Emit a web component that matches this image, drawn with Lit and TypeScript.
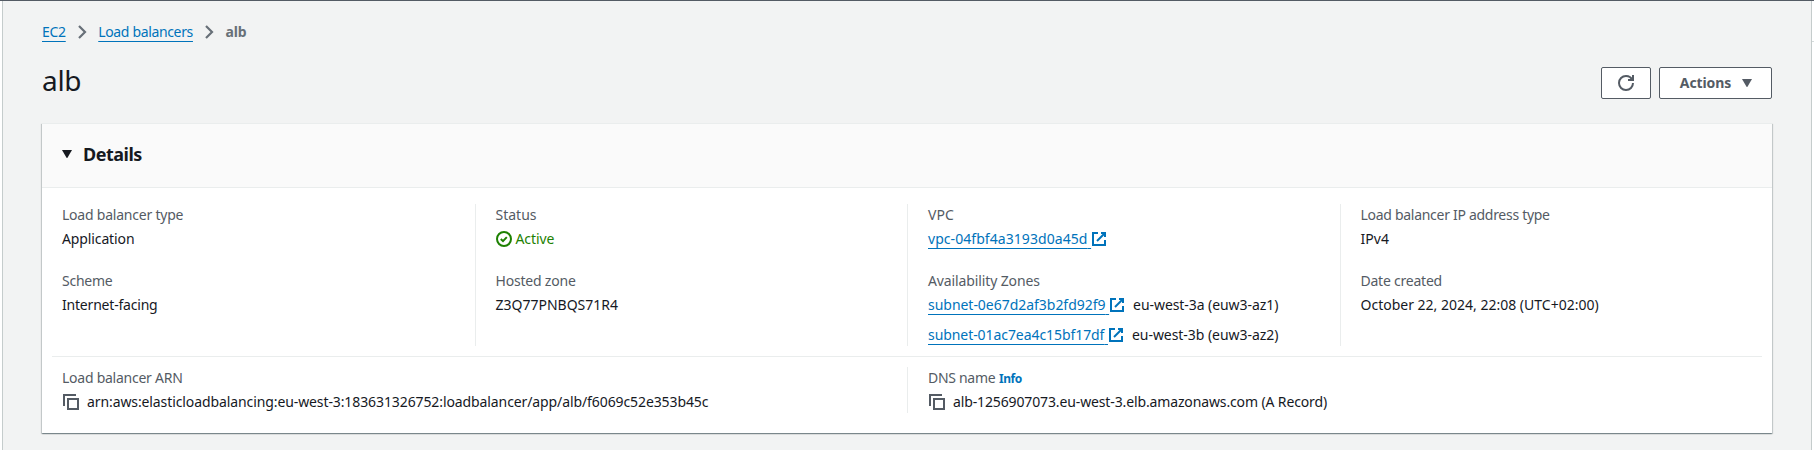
import { LitElement, html, css, svg, TemplateResult } from "lit";
import { customElement } from "lit/decorators.js";

/** Text run with its own tracking in px. */
const t = (text: string, tracking = 0) =>
  html`<span style="letter-spacing:${tracking}px">${text}</span>`;

const icon = (body: TemplateResult<2>, cls = "") =>
  html`<svg class="icon ${cls}" viewBox="0 0 16 16" fill="none" stroke="currentColor" stroke-width="2" aria-hidden="true">${body}</svg>`;

const refreshIcon = icon(svg`<path d="M10 5h5V0"/><path d="M15 8a6.957 6.957 0 0 1-7 7 6.957 6.957 0 0 1-7-7 6.957 6.957 0 0 1 7-7 6.87 6.87 0 0 1 6.3 4"/>`);
const activeIcon = icon(svg`<circle cx="8" cy="8" r="7"/><path d="m4.8 8 2.2 2.1 3.8-4"/>`);
const externalIcon = icon(svg`<path d="M10 2h4v4"/><path d="m6 10 8-8"/><path d="M14 9.048V14H2V2h5"/>`);
const copyIcon = icon(svg`<path d="M1 12V1h12"/><path d="M5 5h10v10H5z"/>`, "copy");
const chevron = html`<svg class="chevron" viewBox="0 0 9 14" fill="none" stroke="currentColor" stroke-width="2.2" aria-hidden="true"><path d="M1 1l6 6-6 6"/></svg>`;
const caret = html`<svg class="caret" viewBox="0 0 10 8" fill="currentColor" aria-hidden="true"><path d="M0 0h10L5.6 7.6a.7.7 0 0 1-1.2 0z"/></svg>`;

const link = (text: string, tracking: number) =>
  html`<a class="link">${t(text, tracking)}&nbsp;</a>${externalIcon}`;

const field = (label: unknown, ...lines: unknown[]) => html`
  <div class="field">
    <div class="label">${label}</div>
    <div class="values">${lines.map((l) => html`<div class="value">${l}</div>`)}</div>
  </div>`;

@customElement("app-root")
export class AppRoot extends LitElement {
  static styles = css`
    :host {
      display: block;
      box-sizing: border-box;
      height: 450px;
      overflow: hidden;
      border-top: 1px solid #545b64;
      background: #fff;
      font: 14px/22px "Noto Sans", sans-serif;
      color: #16191f;
    }
    .shell { display: flex; height: 449px; box-sizing: border-box; padding-left: 2px; }
    main {
      flex: 1;
      min-width: 0;
      box-sizing: border-box;
      padding: 20px 39px 0;
      border-left: 1px solid #c5cccc;
      border-right: 1px solid #c5cccc;
      background: #f2f3f3;
    }
    .rail { width: 2px; height: 40px; border-bottom: 1px solid #d5dbdb; }
    .crumbs { display: flex; align-items: center; height: 22px; color: #687078; }
    .crumbs b { font-weight: 700; }
    .chevron { width: 9px; height: 14px; margin: 0 11.5px 0 12px; }
    .link {
      color: #0073bb;
      text-decoration: underline 1px;
      text-underline-offset: 4px;
      text-decoration-skip-ink: none;
    }
    .heading { display: flex; justify-content: space-between; height: 80px; }
    h1 { margin: 17px 0 0; font-size: 28px; line-height: 40px; font-weight: 400; }
    .buttons { display: flex; gap: 8px; padding-top: 24px; }
    .button {
      display: flex;
      align-items: center;
      justify-content: center;
      box-sizing: border-box;
      height: 32px;
      border: 1px solid #545b64;
      border-radius: 2px;
      background: #fff;
      color: #545b64;
      font-weight: 700;
    }
    .square { width: 50px; }
    .menu { width: 113px; gap: 11px; padding-left: 1px; }
    .caret { width: 10px; height: 8px; }
    .icon { width: 16px; height: 16px; flex: none; }
    .card {
      box-sizing: border-box;
      height: 310px;
      border-top: 1px solid #eaeded;
      background: #fff;
      box-shadow: 0 1px 1px 0 rgba(0, 28, 36, 0.3), 1px 1px 1px 0 rgba(0, 28, 36, 0.15), -1px 1px 1px 0 rgba(0, 28, 36, 0.15);
    }
    .card-head {
      display: flex;
      align-items: center;
      gap: 11px;
      box-sizing: border-box;
      height: 64px;
      padding: 0 20px 3px;
      border-bottom: 1px solid #eaeded;
      background: #fafafa;
    }
    h2 { margin: 0; font-size: 18px; line-height: 22px; font-weight: 700; }
    .row { display: grid; margin: 0 10px; padding: 10px 0; }
    .four { grid-template-columns: 422.5px 432.5px 432.5px 1fr; padding-top: 16px; border-bottom: 1px solid #eaeded; }
    .two { grid-template-columns: 855px 1fr; }
    .col { display: flex; flex-direction: column; gap: 20px; padding-left: 20px; border-left: 1px solid #eaeded; }
    .col:first-child { padding-left: 10px; border-left: 0; }
    .label { height: 22px; color: #545b64; }
    .values { display: grid; gap: 8px; margin-top: 2px; }
    .value { display: flex; align-items: center; height: 22px; }
    .ok { display: flex; align-items: center; gap: 4px; color: #1d8102; }
    .value > .icon { color: #0073bb; }
    .value > .copy { margin: 0 8px 0 1px; color: #545b64; }
    .zone { margin-left: 8px; }
    .info { color: #0073bb; font-size: 12px; line-height: 16px; font-weight: 700; }
  `;

  render() {
    return html`
      <div class="shell">
        <main>
          <nav class="crumbs">
            <a class="link">${t("EC2", -0.3)}</a>${chevron}
            <a class="link">${t("Load balancers", -0.35)}</a>${chevron}
            <b>${t("alb", -0.1)}</b>
          </nav>
          <div class="heading">
            <h1>${t("alb", -0.3)}</h1>
            <div class="buttons">
              <div class="button square">${refreshIcon}</div>
              <div class="button menu">${t("Actions", -0.1)}${caret}</div>
            </div>
          </div>
          <section class="card">
            <div class="card-head">${caret}<h2>${t("Details", -0.5)}</h2></div>
            <div class="row four">
              <div class="col">
                ${field(t("Load balancer type", -0.22), t("Application", -0.12))}
                ${field(t("Scheme", -0.25), t("Internet-facing", -0.2))}
              </div>
              <div class="col">
                ${field(t("Status", 0), html`<span class="ok">${activeIcon}${t("Active", -0.1)}</span>`)}
                ${field(t("Hosted zone", -0.2), t("Z3Q77PNBQS71R4", 0))}
              </div>
              <div class="col">
                ${field(t("VPC", 0.05), link("vpc-04fbf4a3193d0a45d", 0.06))}
                ${field(
                  t("Availability Zones", -0.12),
                  html`${link("subnet-0e67d2af3b2fd92f9", -0.03)}<span class="zone">${t("eu-west-3a (euw3-az1)", -0.07)}</span>`,
                  html`${link("subnet-01ac7ea4c15bf17df", -0.07)}<span class="zone">${t("eu-west-3b (euw3-az2)", -0.05)}</span>`,
                )}
              </div>
              <div class="col">
                ${field(t("Load balancer IP address type", -0.29), t("IPv4", 0.05))}
                ${field(t("Date created", -0.23), t("October 22, 2024, 22:08 (UTC+02:00)", 0))}
              </div>
            </div>
            <div class="row two">
              <div class="col">
                ${field(t("Load balancer ARN", -0.25), html`${copyIcon}${t("arn:aws:elasticloadbalancing:eu-west-3:183631326752:loadbalancer/app/alb/f6069c52e353b45c", -0.1)}`)}
              </div>
              <div class="col">
                ${field(html`${t("DNS name", -0.3)} <span class="info">${t("Info", -0.4)}</span>`, html`${copyIcon}${t("alb-1256907073.eu-west-3.elb.amazonaws.com (A Record)", -0.13)}`)}
              </div>
            </div>
          </section>
        </main>
        <div class="rail"></div>
      </div>`;
  }
}
